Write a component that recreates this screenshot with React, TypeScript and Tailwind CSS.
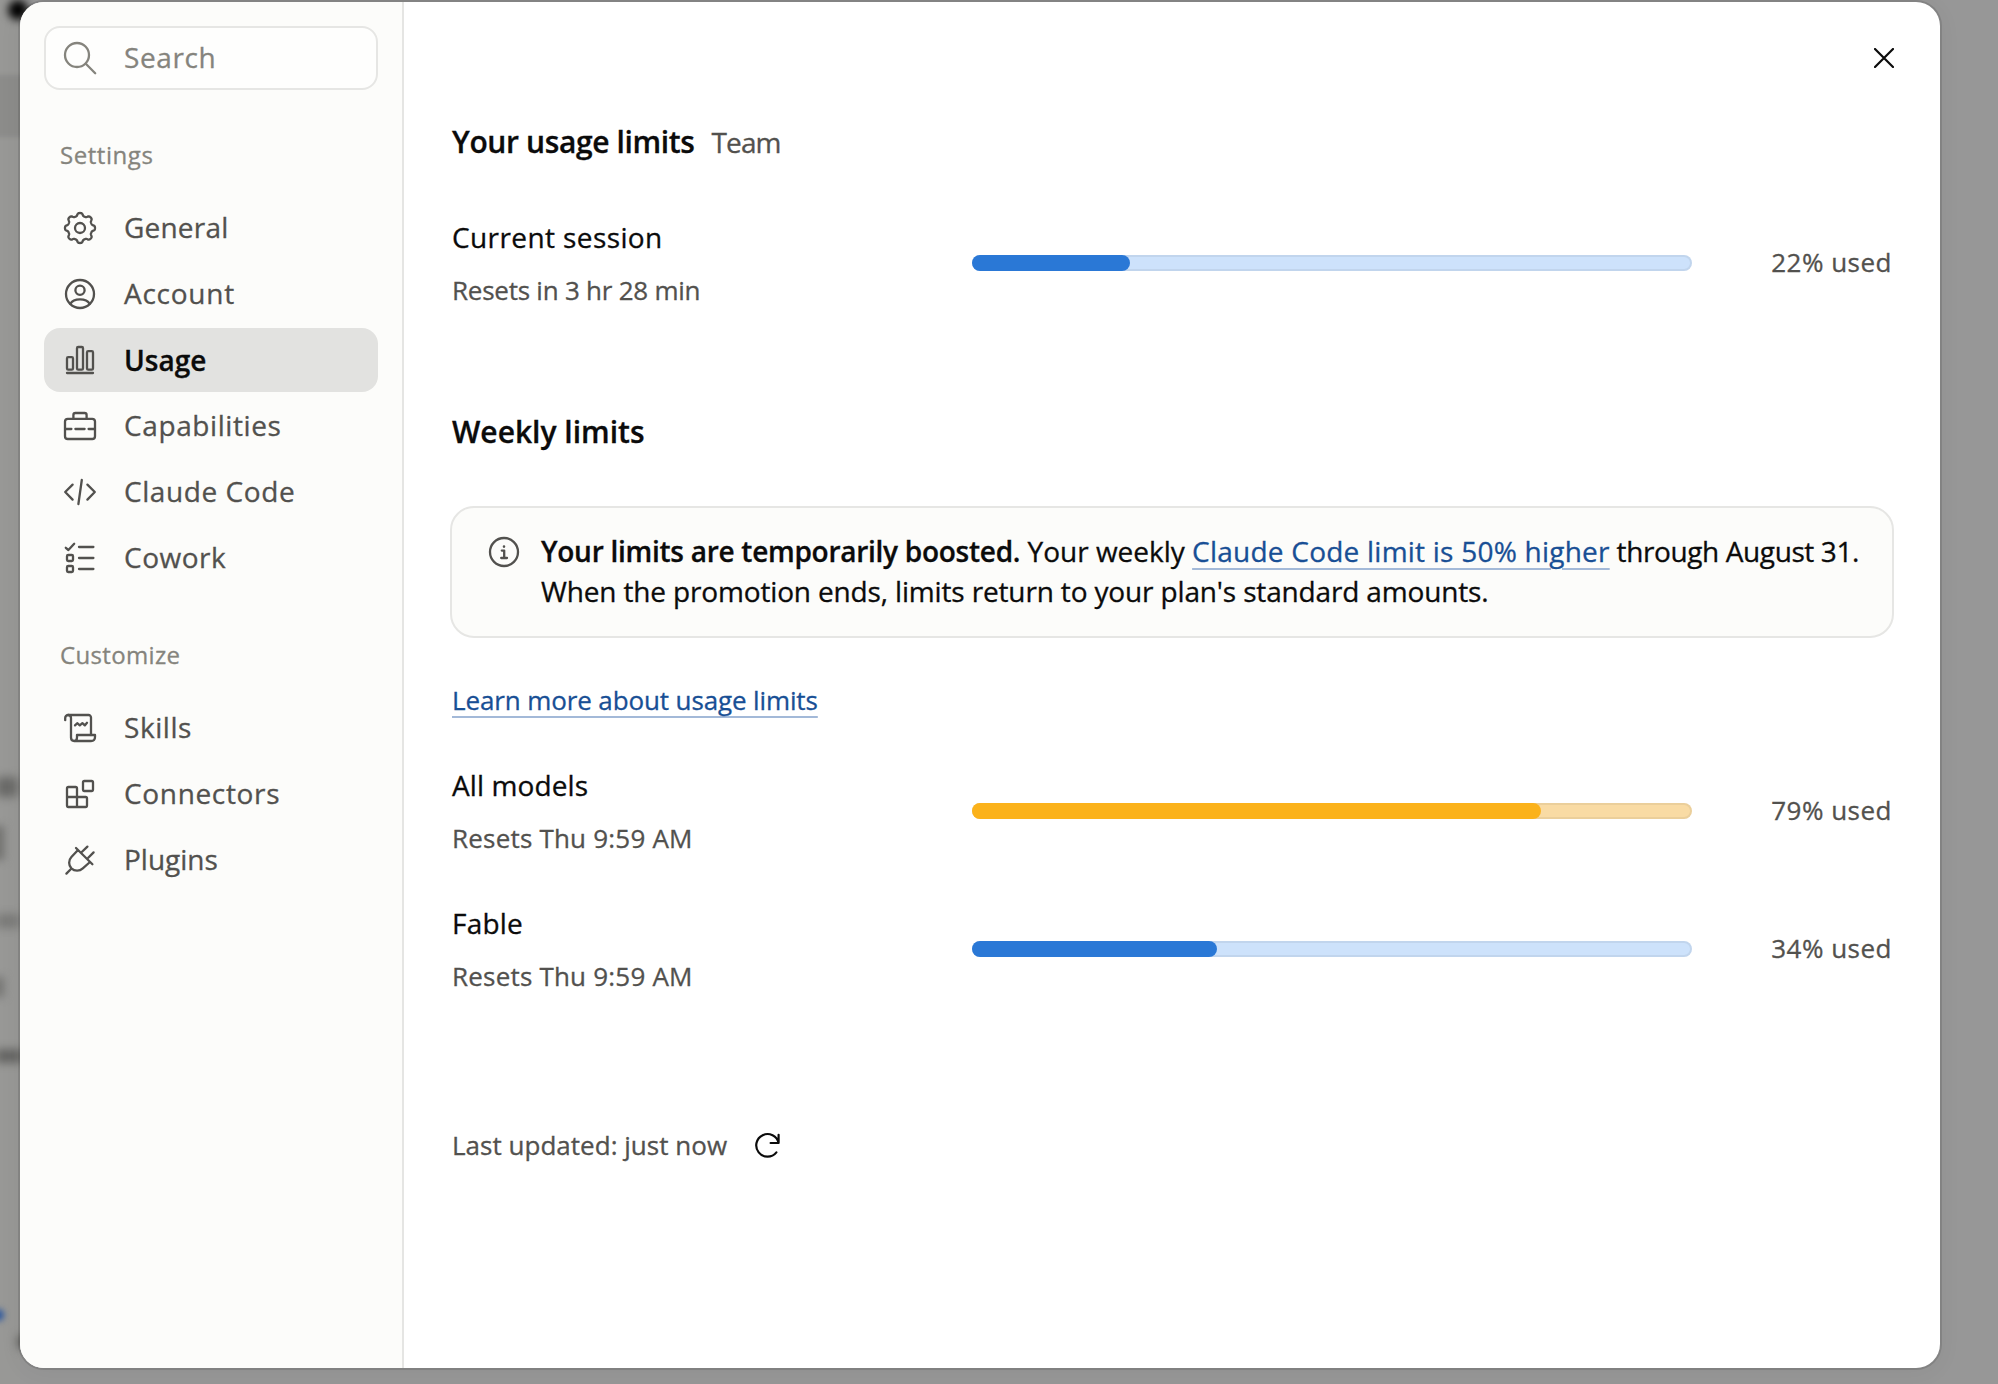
import type { ReactNode } from "react";

function Icon({ children, className = "size-10" }: { children: ReactNode; className?: string }) {
  return (
    <svg
      viewBox="0 0 20 20"
      fill="none"
      stroke="currentColor"
      strokeWidth="1.15"
      strokeLinecap="round"
      strokeLinejoin="round"
      className={`shrink-0 ${className}`}
    >
      {children}
    </svg>
  );
}

// Eight-lobed cog outline sampled around the centre of the 20-unit grid.
const cogPoints = Array.from({ length: 192 }, (_, i) => {
  const angle = (i / 192) * Math.PI * 2;
  const radius = 6.8 + (0.7 * Math.tanh(1.8 * Math.cos(8 * angle))) / Math.tanh(1.8);
  return `${(10 + radius * Math.sin(angle)).toFixed(2)},${(10 - radius * Math.cos(angle)).toFixed(2)}`;
}).join(" ");

const icons: Record<string, ReactNode> = {
  general: (
    <>
      <polygon points={cogPoints} />
      <circle cx="10" cy="10" r="2.5" />
    </>
  ),
  account: (
    <>
      <circle cx="10" cy="10" r="7" />
      <circle cx="10" cy="8.1" r="2.3" />
      <path d="M5.2 14.9C6 13.4 7.8 12.7 10 12.7s4 .7 4.8 2.2" />
    </>
  ),
  usage: (
    <>
      <rect x="3.5" y="8.6" width="3" height="6.2" rx=".6" />
      <rect x="8.5" y="3.5" width="3" height="11.3" rx=".6" />
      <rect x="13.5" y="5.6" width="3" height="9.2" rx=".6" />
      <path d="M3.5 16.5h13" />
    </>
  ),
  capabilities: (
    <>
      <rect x="2.5" y="6.4" width="15" height="10.1" rx="1.4" />
      <path d="M6.7 6.3V4.5a1 1 0 0 1 1-1h4.6a1 1 0 0 1 1 1v1.8M2.7 11.5h3M7.7 11.5h4.6M14.3 11.5h3" />
    </>
  ),
  code: <path d="M6.3 6.3 2.6 10l3.7 3.8M13.7 6.3l3.7 3.7-3.7 3.8M10.9 4 9.2 16" />,
  cowork: (
    <>
      <path d="M2.9 4.9 4.2 6l2.9-3.1M9.5 4.5h7.2M9.5 10h7.2M9.5 15.5h7.2" />
      <rect x="3.5" y="8.5" width="3" height="3" rx=".6" />
      <rect x="3.5" y="14" width="3" height="3" rx=".6" />
    </>
  ),
  skills: (
    <>
      <path d="M2.6 6.1V5A1.5 1.5 0 0 1 4.1 3.5h10.2a1.2 1.2 0 0 1 1.2 1.2v8.8" />
      <path d="M4.1 3.5c.9 0 1.4.6 1.4 1.5v9.8c0 1 .7 1.7 1.6 1.7h8.4c1.2 0 2-.8 2-2v-1h-9v1.3c0 1-.5 1.7-1.4 1.7" />
      <path d="m7.5 8.7 1.1-1.1 1.3 1.1 1.3-1.1 1.2 1.1 1.1-1.3" />
    </>
  ),
  connectors: (
    <>
      <rect x="11.5" y="3.5" width="5" height="5" rx=".7" />
      <path d="M8.5 11.5V7.2a.7.7 0 0 0-.7-.7H4.2a.7.7 0 0 0-.7.7v8.6c0 .4.3.7.7.7h8.6a.7.7 0 0 0 .7-.7v-3.6a.7.7 0 0 0-.7-.7H3.5M8.5 11.5v5" />
    </>
  ),
  plugins: (
    <path d="m8 4 8.2 8.1M10.9 6l2.8-2.7M14 9l2.8-2.8M9 5 5.7 8.5c-1.5 1.6-1.5 4.1 0 5.7 1.6 1.5 4.1 1.5 5.7 0L15 11M5.5 14.5l-2.3 2.3" />
  ),
};

function NavItem({ icon, label, active, tracking }: { icon: string; label: string; active?: boolean; tracking: string }) {
  return (
    <a className={`flex h-16 items-center gap-6 rounded-2xl pl-4 ${active ? "bg-[#e2e2e0]" : ""}`}>
      <Icon className="size-10 text-[#52514e]">{icons[icon]}</Icon>
      <span
        className={`text-[28px] leading-10 ${tracking} ${active ? "font-semibold text-[#0b0b0b]" : "pb-0.5 text-[#52514e]"}`}
      >
        {label}
      </span>
    </a>
  );
}

interface Usage {
  title: string;
  titleTracking: string;
  reset: string;
  resetTracking: string;
  percent: number;
  track: string;
  fill: string;
}

function UsageRow({ title, titleTracking, reset, resetTracking, percent, track, fill }: Usage) {
  return (
    <div className="flex h-[92px] items-center">
      <div className="flex h-full w-[520px] flex-col gap-[15px]">
        <div className={`text-[28px] leading-10 text-[#0b0b0b] ${titleTracking}`}>{title}</div>
        <div className={`text-[26px] leading-9 text-[#52514e] ${resetTracking}`}>{reset}</div>
      </div>
      <div className={`h-4 w-[720px] rounded-full shadow-[inset_0_0_0_2px_rgba(11,11,11,0.06)] ${track}`}>
        <div className={`h-full rounded-full ${fill}`} style={{ width: `${percent}%` }} />
      </div>
      <div className="flex-1 pb-0.5 text-right text-[26px] leading-9 tracking-[0.5px] text-[#52514e]">{percent}% used</div>
    </div>
  );
}

// Out-of-focus page content that peeks out beside the dialog.
function Backdrop() {
  return (
    <div className="absolute inset-0 overflow-hidden bg-[#979797]">
      <div className="absolute inset-y-0 left-0 w-5 bg-[#989896]" />
      <div className="absolute -left-2 top-[75px] h-[62px] w-9 bg-[#8c8c8a] blur-[2px]" />
      <div className="absolute left-2 top-0 size-5 rounded-full bg-black blur-[4px]" />
      <div className="absolute -left-1 top-[777px] h-[20px] w-[22px] rounded bg-[#6a6a68] blur-[5px]" />
      <div className="absolute -left-2 top-[826px] h-[34px] w-3 bg-[#70706e] blur-[4px]" />
      <div className="absolute -left-1 top-[914px] h-[14px] w-[24px] bg-[#7a7a78] blur-[5px]" />
      <div className="absolute -left-2 top-[977px] h-[20px] w-3 bg-[#757573] blur-[4px]" />
      <div className="absolute -left-1 top-[1049px] h-[14px] w-[26px] bg-[#666664] blur-[4px]" />
      <div className="absolute -left-2 top-[1309px] size-3 rounded-full bg-[#2a569e] blur-[3px]" />
      <div className="absolute left-4 top-[1334px] size-4 rounded-full bg-[#6a6a68] blur-[4px]" />
    </div>
  );
}

export default function App() {
  return (
    <div className="relative h-[1384px] w-[1998px] overflow-hidden pl-5 pt-0.5 font-['Open_Sans',sans-serif] [-webkit-text-stroke:0.3px]">
      <Backdrop />
      <div className="relative flex h-[1366px] w-[1920px] overflow-hidden rounded-[24px] bg-white shadow-[0_0_0_2px_rgba(11,11,11,0.12),0_4px_24px_rgba(0,0,0,0.05)]">
        <aside className="w-96 shrink-0 border-r-2 border-[#e5e5e3] bg-[#fcfcfa] pl-6 pr-6 pt-6">
          <div className="flex h-16 items-center gap-6 rounded-2xl border-2 border-[#e6e6e4] bg-[#fefefd] pl-3.5 text-[#85847d]">
            <Icon>
              <circle cx="8.5" cy="8.5" r="6" />
              <path d="m12.9 12.9 4.7 4.7" />
            </Icon>
            <span className="pb-0.5 text-[28px] leading-10 tracking-[0.6px]">Search</span>
          </div>
          <h3 className="mt-[47px] pl-4 text-[24px] leading-9 tracking-[0.55px] text-[#85847d]">Settings</h3>
          <nav className="mt-[23px] flex flex-col gap-0.5">
            <NavItem icon="general" label="General" tracking="tracking-[0.2px]" />
            <NavItem icon="account" label="Account" tracking="tracking-[0.75px]" />
            <NavItem icon="usage" label="Usage" tracking="tracking-[0px]" active />
            <NavItem icon="capabilities" label="Capabilities" tracking="tracking-[0.6px]" />
            <NavItem icon="code" label="Claude Code" tracking="tracking-[0.58px]" />
            <NavItem icon="cowork" label="Cowork" tracking="tracking-[0.51px]" />
          </nav>
          <h3 className="mt-[47px] pl-4 text-[24px] leading-9 tracking-[0.35px] text-[#85847d]">Customize</h3>
          <nav className="mt-[23px] flex flex-col gap-0.5">
            <NavItem icon="skills" label="Skills" tracking="tracking-[0.55px]" />
            <NavItem icon="connectors" label="Connectors" tracking="tracking-[0.66px]" />
            <NavItem icon="plugins" label="Plugins" tracking="tracking-[0px]" />
          </nav>
        </aside>

        <main className="relative flex-1 px-12 pt-[120px]">
          <button className="absolute right-9 top-9 flex size-10 items-center justify-center text-[#0b0b0b]">
            <svg viewBox="0 0 20 20" fill="none" stroke="currentColor" strokeWidth="2.2" strokeLinecap="round" className="size-5">
              <path d="m1 1 18 18M19 1 1 19" />
            </svg>
          </button>

          <div className="flex h-10 gap-[17px]">
            <h2 className="text-[30px] font-semibold leading-10 tracking-[-0.37px] text-[#0b0b0b]">Your usage limits</h2>
            <span className="text-[28px] leading-10 tracking-[-0.9px] text-[#52514e]">Team</span>
          </div>
          <div className="mt-[55px]">
            <UsageRow
              title="Current session"
              titleTracking="tracking-[0.4px]"
              reset="Resets in 3 hr 28 min"
              resetTracking="tracking-[-0.24px]"
              percent={22}
              track="bg-[#cde2fb]"
              fill="bg-[#2a78d6]"
            />
          </div>

          <h2 className="mt-[103px] text-[30px] font-semibold leading-10 tracking-[0px] text-[#0b0b0b]">Weekly limits</h2>
          <div className="-mx-0.5 mt-[54px] flex h-[132px] gap-4 rounded-[24px] border-2 border-[#e6e6e4] bg-[#fcfcfa] pl-8 pt-[23px]">
            <Icon className="size-10 text-[#52514e]">
              <circle cx="10" cy="10.5" r="7" />
              <path d="M8.9 9.8h1.2v3.6M8.6 13.5h2.9" />
              <circle cx="10" cy="7.8" r=".35" fill="currentColor" strokeWidth=".6" />
            </Icon>
            <p className="whitespace-nowrap pl-px text-[28px] leading-10 text-[#0b0b0b]">
              <span className="font-semibold tracking-[-0.27px]">Your limits are temporarily boosted.</span>
              <span className="tracking-[0px]"> Your weekly </span>
              <a className="tracking-[0.23px] text-[#184f95] underline decoration-[#a3b9d8] decoration-2 underline-offset-[6px]">
                Claude Code limit is 50% higher
              </a>
              <span className="tracking-[-0.39px]"> through August 31.</span>
              <br />
              <span className="tracking-[-0.15px]">When the promotion ends, limits return to your plan's standard amounts.</span>
            </p>
          </div>

          <div className="mt-11 h-9 text-[26px] leading-9">
            <a className="tracking-[-0.12px] text-[#184f95] underline decoration-[#a3b9d8] decoration-2 underline-offset-[6px] [text-decoration-skip-ink:none]">
              Learn more about usage limits
            </a>
          </div>
          <div className="mt-[47px] flex flex-col gap-[46px]">
            <UsageRow
              title="All models"
              titleTracking="tracking-[0.1px]"
              reset="Resets Thu 9:59 AM"
              resetTracking="tracking-[0.2px]"
              percent={79}
              track="bg-[#f9dba4]"
              fill="bg-[#fbb21b]"
            />
            <UsageRow
              title="Fable"
              titleTracking="tracking-[0.2px]"
              reset="Resets Thu 9:59 AM"
              resetTracking="tracking-[0.2px]"
              percent={34}
              track="bg-[#cde2fb]"
              fill="bg-[#2a78d6]"
            />
          </div>

          <div className="mt-[132px] flex h-9 items-center gap-6">
            <span className="text-[26px] leading-9 tracking-[0.02px] text-[#52514e]">Last updated: just now</span>
            <svg
              viewBox="0 -1 32 32"
              fill="none"
              stroke="#0b0b0b"
              strokeWidth="2.2"
              strokeLinecap="round"
              strokeLinejoin="round"
              className="size-8"
            >
              <path d="M27.6 13A11.3 11.3 0 1 0 25.4 22.4M27.6 4.8V13h-8" />
            </svg>
          </div>
        </main>
      </div>
    </div>
  );
}
